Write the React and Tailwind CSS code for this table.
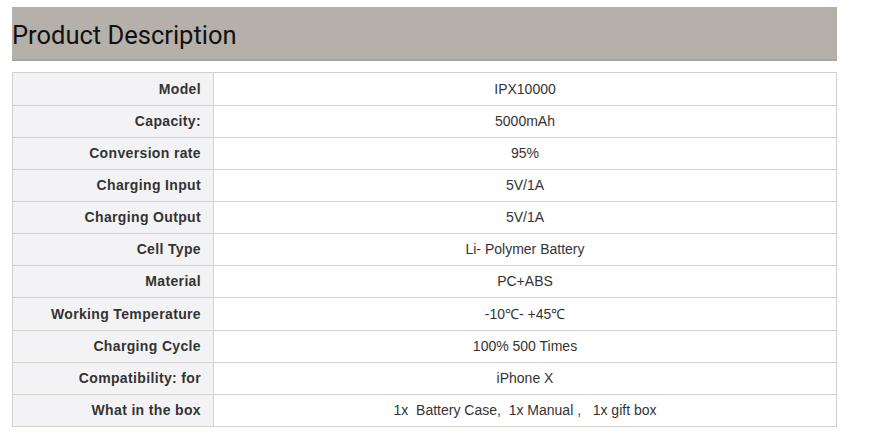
import React from "react";

const specs = [
  ["Model", "IPX10000"],
  ["Capacity:", "5000mAh"],
  ["Conversion rate", "95%"],
  ["Charging Input", "5V/1A"],
  ["Charging Output", "5V/1A"],
  ["Cell Type", "Li- Polymer Battery"],
  ["Material", "PC+ABS"],
  ["Working Temperature", "-10\u2103- +45\u2103"],
  ["Charging Cycle", "100% 500 Times"],
  ["Compatibility: for", "iPhone X"],
  ["What in the box", "1x\u00a0 Battery Case,\u00a0 1x Manual ,\u00a0\u00a0 1x gift box"],
];

export default function App() {
  return (
    <div className="w-[872px] h-[435px] bg-white pt-[7px] pl-[12px] font-['Liberation_Sans',Arial,sans-serif]">
      <div className="w-[825px] h-[54px] bg-[#b5b0a9] border-b-2 border-[#a8a59e] flex items-center">
        <h2 className="font-['Roboto',sans-serif] text-[25.5px] text-[#111] leading-none mt-[5px]">
          Product Description
        </h2>
      </div>

      <table className="mt-[11px] w-[825px] border-collapse border border-[#d3d1cb] text-[14px]">
        <tbody>
          {specs.map(([label, value], idx) => (
            <tr key={idx} className={idx === 0 || idx === 7 ? "h-[33px]" : "h-[32px]"}>
              <td className="w-[201px] bg-[#f3f3f5] border border-[#d3d1cb] text-right pr-[12px] font-bold tracking-[0.35px] text-[#333]">
                {label}
              </td>
              <td className="border border-[#d3d1cb] text-center text-[#333]">
                {value}
              </td>
            </tr>
          ))}
        </tbody>
      </table>
    </div>
  );
}
